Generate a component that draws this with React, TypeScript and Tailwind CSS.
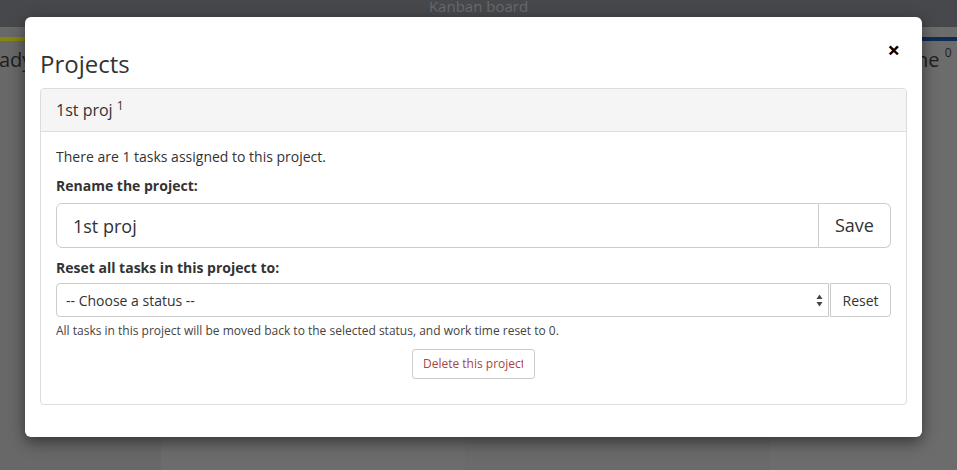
import React from "react";

export default function App() {
  return (
    <div
      className="relative w-[957px] h-[470px] overflow-hidden bg-[#6b6b6b] text-[#333]"
      style={{ fontFamily: '"Open Sans", "Liberation Sans", sans-serif' }}
    >
      {/* header bar */}
      <div className="h-[27px] bg-[#47484c] flex justify-center">
        <span className="text-[15px] leading-[16px] text-[#68696c] -mt-[2px]">Kanban board</span>
      </div>
      {/* columns behind */}
      <div className="flex h-[443px]">
        <div className="w-[161px] bg-[#686868] flex flex-col">
          <div className="mt-[10px] h-[4px] bg-[#86860c]" />
          <div className="text-[20px] leading-[24px] text-[#1e1e1e] mt-[7px] -ml-[1px]">ady</div>
        </div>
        <div className="w-[304px] bg-[#6c6c6c]" />
        <div className="w-[305px] bg-[#6a6a6a]" />
        <div className="flex-1 bg-[#6c6c6c] flex flex-col">
          <div className="mt-[10px] h-[4px] bg-[#0f2c55]" />
          <div className="text-[20px] leading-[24px] text-[#1e1e1e] mt-[7px] ml-[146px] whitespace-nowrap">
            ne <sup className="text-[12px] -top-[10px]">0</sup>
          </div>
        </div>
      </div>

      {/* modal */}
      <div className="absolute left-[25px] top-[17px] w-[897px] h-[420px] bg-white rounded-[6px] shadow-[0_5px_15px_rgba(0,0,0,0.5)] px-[15px]">
        <button className="absolute right-[22px] top-[21px] text-[22px] font-bold leading-none text-black">×</button>
        <h4 className="text-[24px] leading-[26px] mt-[34px] font-normal text-[#333]">Projects</h4>
        <div className="mt-[11px] border border-[#ddd] rounded-[4px] h-[317px] overflow-hidden">
          <div className="h-[43px] bg-[#f5f5f5] border-b border-[#ddd] px-[15px] flex items-center">
            <span className="text-[16px] leading-[20px] text-[#333]">
              1st proj <sup className="text-[12px] -top-[6px]">1</sup>
            </span>
          </div>
          <div className="px-[15px] pt-[15px]">
            <p className="text-[14px] leading-[20px]">There are 1 tasks assigned to this project.</p>
            <div className="mt-[9px] text-[14px] leading-[20px] font-bold">Rename the project:</div>
            <div className="mt-[7px] flex h-[45px]">
              <input
                readOnly
                value="1st proj"
                className="flex-1 min-w-0 h-full border border-[#ccc] rounded-l-[6px] px-[16px] text-[18px] text-[#333] outline-none"
              />
              <button className="w-[72px] h-full border border-[#ccc] border-l-0 rounded-r-[6px] text-[18px] text-[#333] bg-white">
                Save
              </button>
            </div>
            <div className="mt-[10px] text-[14px] leading-[20px] font-bold">Reset all tasks in this project to:</div>
            <div className="mt-[5px] flex h-[34px]">
              <div className="relative flex-1 h-full border border-[#ccc] rounded-l-[4px] flex items-center pl-[9px]">
                <span className="text-[14px] text-[#333]">-- Choose a status --</span>
                <svg className="absolute right-[5px] top-[10px]" width="7" height="13" viewBox="0 0 7 13">
                  <path d="M3.5 0.5 L6.5 5 L0.5 5 Z" fill="#444" />
                  <path d="M3.5 12.5 L6.5 8 L0.5 8 Z" fill="#444" />
                </svg>
              </div>
              <button className="w-[61px] h-full border border-[#ccc] rounded-r-[4px] text-[14px] text-[#333] bg-white ml-[1px]">
                Reset
              </button>
            </div>
            <p className="mt-[5px] text-[12px] leading-[17px] text-[#444]">
              All tasks in this project will be moved back to the selected status, and work time reset to 0.
            </p>
            <div className="flex justify-center mt-[10px]">
              <button className="w-[123px] h-[30px] border border-[#ccc] rounded-[3px] bg-white text-[12px] text-[#a94442] whitespace-nowrap pl-[10px] pr-[11px] text-left">
                <span className="block overflow-hidden">Delete this project</span>
              </button>
            </div>
          </div>
        </div>
      </div>
    </div>
  );
}
